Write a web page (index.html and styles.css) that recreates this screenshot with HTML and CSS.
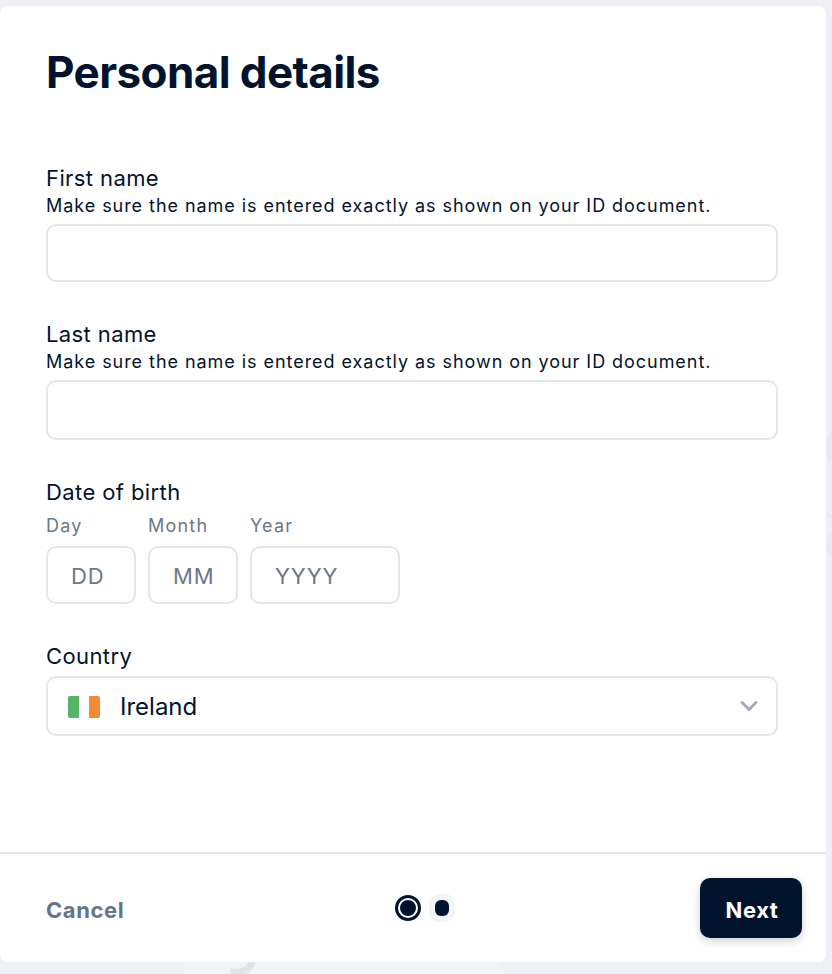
FILE: index.html
```html
<!DOCTYPE html>
<html lang="en">
<head>
<meta charset="utf-8">
<title>Personal details</title>
<link rel="stylesheet" href="styles.css">
</head>
<body>
<svg class="backdrop" width="832" height="974" viewBox="0 0 832 974" aria-hidden="true">
  <path d="M183 962H500L505 974H183z" fill="#f3f4f7"/>
  <path d="M129 962h55v12h-55z" fill="#eef0f3"/>
  <path d="M230 972c10 1 20-1 22-10" fill="none" stroke="#e2e3e8" stroke-width="7"/>
  <path d="M832 430c-5 4-7 14-6 22s3 10 6 10z" fill="#e9eaef"/>
  <path d="M826 512l6 3v4l-6-2z" fill="#e9eaef"/>
  <path d="M832 533c-4 2-6 8-6 14s2 9 6 10z" fill="#e9eaef"/>
</svg>
<main class="card">
  <div class="content">
    <h1 class="title">Personal details</h1>
    <div class="field field-first">
      <label class="label">First name</label>
      <p class="hint">Make sure the name is entered exactly as shown on your ID document.</p>
      <div class="input"></div>
    </div>
    <div class="field field-last">
      <label class="label">Last name</label>
      <p class="hint">Make sure the name is entered exactly as shown on your ID document.</p>
      <div class="input input-tall"></div>
    </div>
    <div class="field field-dob">
      <label class="label label-spaced">Date of birth</label>
      <div class="dob">
        <div class="dob-part">
          <span class="sub">Day</span>
          <div class="input dob-day"><span class="ph">DD</span></div>
        </div>
        <div class="dob-part">
          <span class="sub">Month</span>
          <div class="input dob-day"><span class="ph">MM</span></div>
        </div>
        <div class="dob-part">
          <span class="sub">Year</span>
          <div class="input dob-year"><span class="ph">YYYY</span></div>
        </div>
      </div>
    </div>
    <div class="field field-country">
      <label class="label label-country">Country</label>
      <div class="input input-tall select">
        <svg class="flag" width="32" height="22" viewBox="0 0 32 22" aria-hidden="true">
          <path d="M2 0h9v22H2a2 2 0 0 1-2-2V2a2 2 0 0 1 2-2z" fill="#53b565"/>
          <path d="M21 0h9a2 2 0 0 1 2 2v18a2 2 0 0 1-2 2h-9z" fill="#f38b36"/>
        </svg>
        <span class="value">Ireland</span>
        <svg class="chev" width="18" height="12" viewBox="0 0 18 12" aria-hidden="true">
          <path d="M2 2.5l7 7 7-7" fill="none" stroke="#a3abba" stroke-width="3" stroke-linecap="round" stroke-linejoin="round"/>
        </svg>
      </div>
    </div>
  </div>
  <footer class="footer">
    <span class="cancel">Cancel</span>
    <div class="steps">
      <span class="step-current"><span class="step-inner"></span></span>
      <span class="step-next"><span class="step-dot"></span></span>
    </div>
    <button class="next" type="button">Next</button>
  </footer>
</main>
</body>
</html>
```
FILE: styles.css
```css
* { box-sizing: border-box; }
html, body { margin: 0; height: 100%; }
body {
  background: #eff0f5;
  font-family: Inter, "Liberation Sans", sans-serif;
  color: #02142d;
  padding: 6px 6px 12px 0;
  overflow: hidden;
  position: relative;
}
.backdrop { position: absolute; left: 0; top: 0; }
.card {
  position: relative;
  background: #fff;
  border-radius: 8px;
  height: 956px;
  display: flex;
  flex-direction: column;
}
.content { flex: 1; padding: 0 48px 0 46px; }
.title {
  margin: 36px 0 0;
  font-size: 44px;
  line-height: 60px;
  font-weight: 700;
  letter-spacing: -0.6px;
}
.field { display: flex; flex-direction: column; }
.field-first { margin-top: 60px; }
.field-last { margin-top: 36px; }
.field-dob { margin-top: 36px; }
.field-country { margin-top: 36px; }
.label {
  font-size: 22px;
  line-height: 32px;
  font-weight: 400;
  letter-spacing: 0.4px;
}
.label-spaced { margin-bottom: 5px; }
.label-country { margin-bottom: 4px; }
.hint {
  margin: -1px 0 5px;
  font-size: 18px;
  line-height: 26px;
  letter-spacing: 0.95px;
}
.input {
  height: 58px;
  border: 2px solid #e5e6ec;
  border-radius: 10px;
  background: #fff;
}
.input-tall { height: 60px; }
.dob { display: flex; gap: 12px; }
.dob-part { display: flex; flex-direction: column; }
.sub {
  font-size: 18px;
  line-height: 26px;
  letter-spacing: 1.2px;
  color: #6c778c;
  margin-bottom: 7px;
}
.dob-day { width: 90px; }
.dob-year { width: 150px; }
.dob .input { display: flex; align-items: center; padding: 1px 0 0 23px; }
.ph { font-size: 22px; letter-spacing: 0.9px; color: #6c778c; }
.select {
  display: flex;
  align-items: center;
  padding: 0 18px 0 20px;
}
.flag { flex: none; margin-top: 2px; }
.value { margin-left: 20px; flex: 1; font-size: 24px; letter-spacing: 0; }
.chev { flex: none; }
.footer {
  height: 110px;
  border-top: 2px solid #e5e6ec;
  display: flex;
  align-items: center;
  padding: 0 24px 0 46px;
  position: relative;
}
.cancel { font-size: 22px; font-weight: 700; letter-spacing: 0.6px; color: #68748a; padding-top: 4px; }
.steps {
  position: absolute;
  left: 395px;
  top: 40px;
  display: flex;
  align-items: center;
  gap: 8px;
}
.step-current {
  width: 26px; height: 26px; border-radius: 50%;
  background: #02142d;
  display: flex; align-items: center; justify-content: center;
}
.step-inner {
  display: block;
  width: 20px; height: 20px; border-radius: 50%;
  background: #02142d;
  border: 2px solid #fff;
}
.step-next {
  width: 26px; height: 28px; border-radius: 10px;
  background: #f3f5fa;
  display: flex; align-items: center; justify-content: center;
}
.step-dot { display: block; width: 14px; height: 16px; border-radius: 6px; background: #02142d; }
.next {
  margin-left: auto;
  width: 102px; height: 60px;
  padding: 3px 0 0 2px;
  border: 0;
  border-radius: 10px;
  background: #02142d;
  color: #fff;
  font: 700 22px Inter, "Liberation Sans", sans-serif;
  letter-spacing: 0.6px;
  box-shadow: 0 3px 8px rgba(2,20,45,.2);
}
```
